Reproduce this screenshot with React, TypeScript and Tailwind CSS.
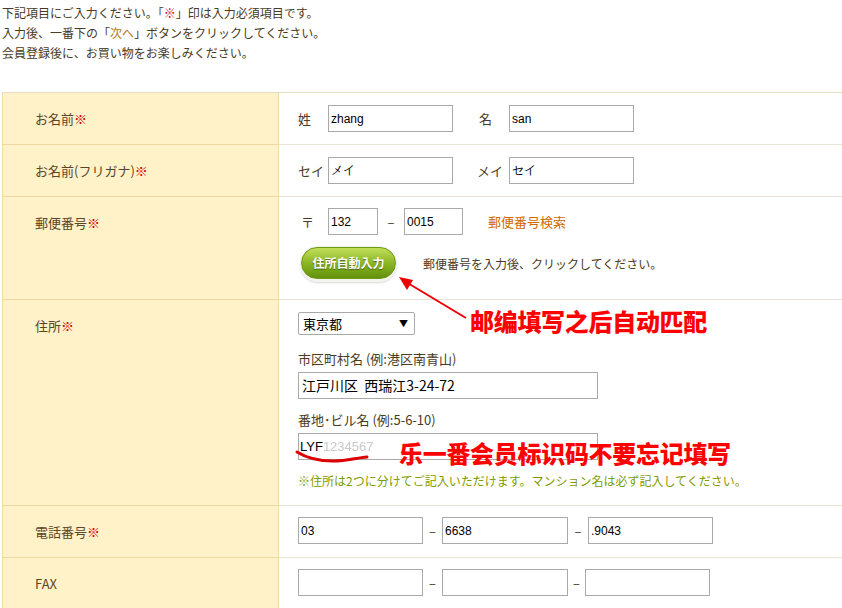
import React from "react";

const Req = () => <span className="text-[#d40000]">※</span>;

function Row({
  label,
  h,
  children,
  last,
}: {
  label: React.ReactNode;
  h: string;
  children: React.ReactNode;
  last?: boolean;
}) {
  return (
    <div className={`flex ${h}`}>
      <div
        className={`w-[276px] shrink-0 bg-[#fff2c9] border-r border-[#f0dba6] pl-[32px] pt-[17px] text-[13px] leading-[18px] text-[#5a4527] ${
          last ? "" : "border-b border-b-[#eed8a3]"
        }`}
      >
        {label}
      </div>
      <div
        className={`flex-1 pl-[19px] text-[13px] text-[#4a3b22] ${
          last ? "" : "border-b border-[#ebe3d6]"
        }`}
      >
        {children}
      </div>
    </div>
  );
}

const inp =
  "h-[27px] border border-[#a9a9a9] bg-white px-[2px] text-[12px] text-black font-['Liberation_Sans',sans-serif] outline-none";

export default function App() {
  return (
    <div className="relative w-[842px] h-[608px] overflow-hidden bg-white font-['Noto_Sans_CJK_JP',sans-serif] text-[12px] text-[#4a3a1e]">
      <div className="pl-[2px] pt-[3px] leading-[20px]">
        <div>
          下記項目にご入力ください。「<Req />」印は入力必須項目です。
        </div>
        <div>
          入力後、一番下の「<span className="text-[#b5781c]">次へ</span>」ボタンをクリックしてください。
        </div>
        <div>会員登録後に、お買い物をお楽しみください。</div>
      </div>

      <div className="mt-[29px] ml-[2px] border-t border-[#e7dcc6] border-l border-l-[#f0dca8]">
        <Row
          h="h-[52px]"
          label={
            <>
              お名前
              <Req />
            </>
          }
        >
          <div className="flex items-center pt-[12px]">
            <span className="w-[30px]">姓</span>
            <input className={`${inp} w-[125px]`} defaultValue="zhang" readOnly />
            <span className="ml-[26px] w-[30px]">名</span>
            <input className={`${inp} w-[125px]`} defaultValue="san" readOnly />
          </div>
        </Row>
        <Row
          h="h-[52px]"
          label={
            <>
              お名前(フリガナ)
              <Req />
            </>
          }
        >
          <div className="flex items-center pt-[12px]">
            <span className="w-[30px]">セイ</span>
            <input className={`${inp} w-[125px]`} defaultValue="メイ" readOnly />
            <span className="ml-[24px] w-[32px]">メイ</span>
            <input className={`${inp} w-[125px]`} defaultValue="セイ" readOnly />
          </div>
        </Row>
        <Row
          h="h-[103px]"
          label={
            <>
              郵便番号
              <Req />
            </>
          }
        >
          <div className="flex items-center pt-[11px]">
            <span className="ml-[3px] w-[27px]">〒</span>
            <input className={`${inp} w-[50px]`} defaultValue="132" readOnly />
            <span className="w-[26px] text-center">–</span>
            <input className={`${inp} w-[59px]`} defaultValue="0015" readOnly />
            <span className="ml-[25px] text-[#d26a00]">郵便番号検索</span>
          </div>
          <div className="flex items-center mt-[11px]">
            <div className="ml-[2px] rounded-full bg-[#f3f3ef] p-[1px] pb-[3px] shadow-[0_1px_2px_rgba(0,0,0,0.15)]">
              <div className="flex h-[32px] w-[95px] items-center justify-center rounded-full border border-[#6e9a0e] bg-gradient-to-b from-[#c2e05a] via-[#8cb622] to-[#62910b] text-[12px] font-bold text-white [text-shadow:0_1px_1px_rgba(0,0,0,0.45)]">
                住所自動入力
              </div>
            </div>
            <span className="ml-[26px] text-[12px]">郵便番号を入力後、クリックしてください。</span>
          </div>
        </Row>
        <Row
          h="h-[206px]"
          label={
            <>
              住所
              <Req />
            </>
          }
        >
          <div className="pt-[12px]">
            <div className="flex h-[23px] w-[117px] items-center justify-between rounded-[2px] border border-[#a9a9a9] bg-white pl-[4px] pr-[6px] text-[13px] text-black">
              <span>東京都</span>
              <span className="text-[9px]">▼</span>
            </div>
            <div className="mt-[15px] leading-[18px]">市区町村名 (例:港区南青山)</div>
            <div className="mt-[4px] flex h-[27px] w-[300px] items-center border border-[#a9a9a9] px-[3px] text-[14px] text-black">
              江戸川区&nbsp;&nbsp;西瑞江3-24-72
            </div>
            <div className="mt-[12px] leading-[18px]">番地･ビル名 (例:5-6-10)</div>
            <div className="mt-[4px] flex h-[27px] w-[300px] items-center border border-[#a9a9a9] px-[1px] text-[13px] text-black font-['Liberation_Sans',sans-serif]">
              LYF<span className="text-[#c8c8c8] blur-[0.6px]">1234567</span>
            </div>
            <div className="mt-[12px] text-[12px] leading-[18px] text-[#7f9c00]">
              ※住所は2つに分けてご記入いただけます。マンション名は必ず記入してください。
            </div>
          </div>
        </Row>
        <Row
          h="h-[52px]"
          label={
            <>
              電話番号
              <Req />
            </>
          }
        >
          <div className="flex items-center pt-[11px]">
            <input className={`${inp} w-[125px]`} defaultValue="03" readOnly />
            <span className="w-[19px] text-center">–</span>
            <input className={`${inp} w-[126px]`} defaultValue="6638" readOnly />
            <span className="w-[20px] text-center">–</span>
            <input className={`${inp} w-[125px]`} defaultValue=".9043" readOnly />
          </div>
        </Row>
        <Row h="h-[60px]" label="FAX" last>
          <div className="flex items-center pt-[11px]">
            <input className={`${inp} w-[125px]`} readOnly />
            <span className="w-[19px] text-center">–</span>
            <input className={`${inp} w-[126px]`} readOnly />
            <span className="w-[17px] text-center">–</span>
            <input className={`${inp} w-[125px]`} readOnly />
          </div>
        </Row>
      </div>

      {/* annotations */}
      <svg className="absolute left-0 top-0" width="842" height="608" viewBox="0 0 842 608">
        <line x1="466" y1="318" x2="406" y2="282" stroke="#ee0000" strokeWidth="2" />
        <polygon points="399,277 413,280 407,290" fill="#ee0000" />
        <path
          d="M297 452 C 305 457, 318 461, 333 461 C 346 461, 356 458, 367 457"
          stroke="#dd0000"
          strokeWidth="3"
          strokeLinecap="round"
          fill="none"
        />
      </svg>
      <div className="absolute left-[470px] top-[305px] text-[24px] font-black leading-[32px] text-[#ff0000] font-['Noto_Sans_CJK_SC',sans-serif] tracking-[-0.3px]">
        邮编填写之后自动匹配
      </div>
      <div className="absolute left-[399px] top-[437px] text-[24px] font-black leading-[32px] text-[#ff0000] font-['Noto_Sans_CJK_SC',sans-serif] tracking-[-0.3px]">
        乐一番会员标识码不要忘记填写
      </div>
    </div>
  );
}
